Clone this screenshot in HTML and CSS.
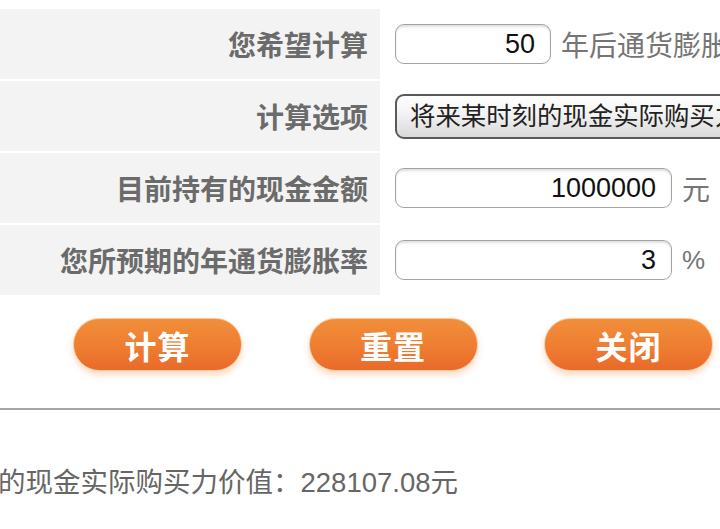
FILE: index.html
```html
<!DOCTYPE html>
<html lang="zh-CN">
<head>
<meta charset="utf-8">
<title>通货膨胀计算器</title>
<link rel="stylesheet" href="styles.css">
</head>
<body>
<div class="page">
  <div class="form">
    <div class="row">
      <div class="label">您希望计算</div>
      <div class="value">
        <div class="input short">50</div>
        <span class="unit">年后通货膨胀对资产的影响</span>
      </div>
    </div>
    <div class="row">
      <div class="label">计算选项</div>
      <div class="value">
        <div class="select">将来某时刻的现金实际购买力价值</div>
      </div>
    </div>
    <div class="row">
      <div class="label">目前持有的现金金额</div>
      <div class="value">
        <div class="input long">1000000</div>
        <span class="unit">元</span>
      </div>
    </div>
    <div class="row">
      <div class="label">您所预期的年通货膨胀率</div>
      <div class="value">
        <div class="input long">3</div>
        <span class="unit pct">%</span>
      </div>
    </div>
  </div>
  <div class="buttons">
    <div class="btn">计算</div>
    <div class="btn">重置</div>
    <div class="btn">关闭</div>
  </div>
  <div class="divider"></div>
  <div class="result"><span class="result-text">50年后的现金实际购买力价值：228107.08元</span></div>
</div>
</body>
</html>
```

FILE: styles.css
```css
html, body {
  margin: 0;
  padding: 0;
  background: #ffffff;
}
body {
  width: 720px;
  height: 529px;
  overflow: hidden;
  font-family: "Liberation Sans", "Noto Sans CJK SC", sans-serif;
}
.page {
  width: 720px;
  padding-top: 9px;
}
.form {
  display: flex;
  flex-direction: column;
  gap: 2px;
}
.row {
  display: flex;
  height: 70px;
  gap: 3px;
}
.label {
  width: 380px;
  flex: none;
  background: #f3f3f3;
  display: flex;
  align-items: center;
  justify-content: flex-end;
  padding-right: 12px;
  box-sizing: border-box;
  font-size: 28px;
  font-weight: 600;
  color: #6b6b6b;
  white-space: nowrap;
}
.value {
  flex: 1;
  display: flex;
  align-items: center;
  padding-left: 12px;
  white-space: nowrap;
  overflow: hidden;
}
.input {
  flex: none;
  height: 40px;
  box-sizing: border-box;
  border: 1.5px solid #a3a3a3;
  border-radius: 9px;
  box-shadow: inset 0 2px 2px rgba(0, 0, 0, 0.12);
  background: #fff;
  font-size: 27px;
  color: #111;
  text-align: right;
  padding-right: 15px;
  line-height: 38px;
}
.input.short { width: 156px; }
.input.long { width: 277px; }
.unit {
  margin-left: 10px;
  font-size: 28px;
  color: #757575;
}
.unit.pct {
  font-size: 26px;
  margin-left: 10px;
}
.select {
  flex: none;
  width: 420px;
  height: 45px;
  box-sizing: border-box;
  border: 2px solid #5a5a5a;
  border-radius: 9px;
  background: linear-gradient(#ffffff 0%, #f2f2f2 45%, #d9d9d9 100%);
  font-size: 25.4px;
  color: #222;
  padding-left: 13px;
  line-height: 41px;
  overflow: hidden;
}
.buttons {
  display: flex;
  justify-content: space-between;
  padding: 0 7px 0 73px;
  margin-top: 23px;
}
.btn {
  width: 169px;
  height: 53px;
  box-sizing: border-box;
  border-radius: 27px;
  background: linear-gradient(#f18f3a 0%, #ee7d31 55%, #e96a29 100%);
  border: 1px solid #f8c69e;
  box-shadow: 0 4px 6px rgba(240, 150, 80, 0.35);
  color: #ffffff;
  font-size: 32px;
  font-weight: 700;
  display: flex;
  align-items: center;
  justify-content: center;
  letter-spacing: 1px;
}
.divider {
  margin-top: 37px;
  height: 2px;
  background: #a5a5a5;
}
.result {
  display: flex;
  justify-content: flex-end;
  width: 458px;
  margin-top: 50px;
  white-space: nowrap;
}
.result-text {
  flex: none;
  font-size: 27.5px;
  color: #666666;
}
```
